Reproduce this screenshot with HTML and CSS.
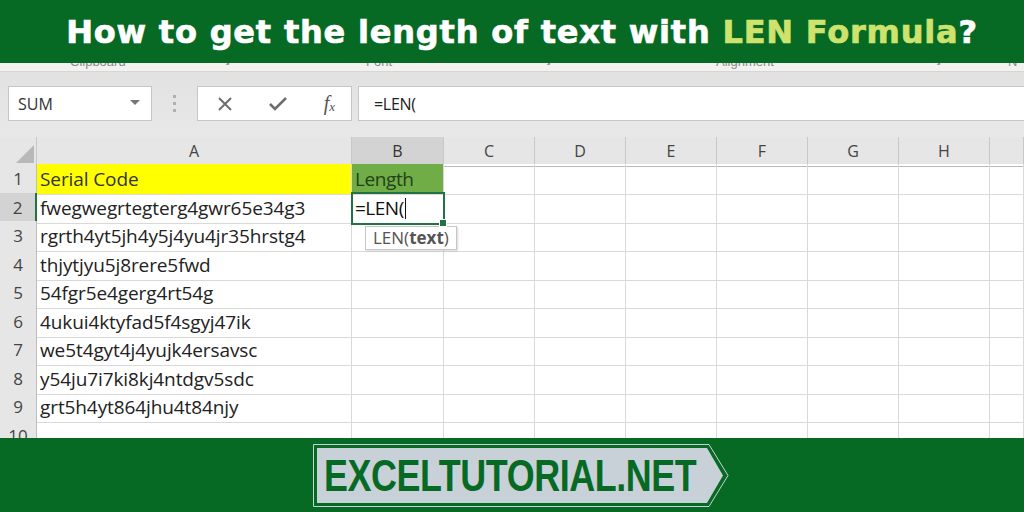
FILE: index.html
```html
<!DOCTYPE html>
<html lang="en">
<head>
    <meta charset="UTF-8">
    <meta name="viewport" content="width=device-width, initial-scale=1.0">
    <title>How to get the length of text with LEN Formula?</title>
    <link rel="stylesheet" href="styles.css">
</head>
<body>
<div class="page">
    <header class="banner">
        <h1>How to get the length of text with <span class="hl">LEN Formula</span>?</h1>
    </header>

    <div class="ribbon">
        <span class="grp g-clip">Clipboard</span>
        <span class="launch l1">&#8600;</span>
        <span class="grp g-font">Font</span>
        <span class="launch l2">&#8600;</span>
        <span class="grp g-align">Alignment</span>
        <span class="launch l3">&#8600;</span>
        <span class="grp g-num">N</span>
    </div>

    <div class="formula-area">
        <div class="name-box">
            <span>SUM</span>
            <svg class="caret" width="10" height="6" viewBox="0 0 10 6"><path d="M0 0 L10 0 L5 5 Z" fill="#777"/></svg>
        </div>
        <div class="dots"><i></i><i></i><i></i></div>
        <div class="fx-buttons">
            <svg width="16" height="16" viewBox="0 0 16 16"><path d="M2 2 L14 14 M14 2 L2 14" stroke="#6d6d6d" stroke-width="2"/></svg>
            <svg width="20" height="16" viewBox="0 0 20 16"><path d="M2 8 L7 13 L18 2" stroke="#6d6d6d" stroke-width="2.6" fill="none"/></svg>
            <span class="fx"><i>f</i><sub>x</sub></span>
        </div>
        <div class="formula-input">=LEN(</div>
    </div>

    <div class="sheet">
        <div class="row head">
            <div class="corner"><svg width="20" height="20" viewBox="0 0 20 20"><path d="M20 2 L20 20 L2 20 Z" fill="#b8b8b8"/></svg></div>
            <div>A</div><div class="sel-col">B</div><div>C</div><div>D</div><div>E</div><div>F</div><div>G</div><div>H</div><div></div>
        </div>
        <div class="row">
            <div class="num">1</div><div class="yellow">Serial Code</div><div class="green">Length</div><div></div><div></div><div></div><div></div><div></div><div></div><div></div>
        </div>
        <div class="row">
            <div class="num sel-row">2</div><div>fwegwegrtegterg4gwr65e34g3</div>
            <div class="active">=LEN(<span class="cursor"></span><span class="tip">LEN(<b>text</b>)</span></div>
            <div></div><div></div><div></div><div></div><div></div><div></div><div></div>
        </div>
        <div class="row">
            <div class="num">3</div><div>rgrth4yt5jh4y5j4yu4jr35hrstg4</div><div></div><div></div><div></div><div></div><div></div><div></div><div></div><div></div>
        </div>
        <div class="row">
            <div class="num">4</div><div>thjytjyu5j8rere5fwd</div><div></div><div></div><div></div><div></div><div></div><div></div><div></div><div></div>
        </div>
        <div class="row">
            <div class="num">5</div><div>54fgr5e4gerg4rt54g</div><div></div><div></div><div></div><div></div><div></div><div></div><div></div><div></div>
        </div>
        <div class="row">
            <div class="num">6</div><div>4ukui4ktyfad5f4sgyj47ik</div><div></div><div></div><div></div><div></div><div></div><div></div><div></div><div></div>
        </div>
        <div class="row">
            <div class="num">7</div><div>we5t4gyt4j4yujk4ersavsc</div><div></div><div></div><div></div><div></div><div></div><div></div><div></div><div></div>
        </div>
        <div class="row">
            <div class="num">8</div><div>y54ju7i7ki8kj4ntdgv5sdc</div><div></div><div></div><div></div><div></div><div></div><div></div><div></div><div></div>
        </div>
        <div class="row">
            <div class="num">9</div><div>grt5h4yt864jhu4t84njy</div><div></div><div></div><div></div><div></div><div></div><div></div><div></div><div></div>
        </div>
        <div class="row">
            <div class="num">10</div><div></div><div></div><div></div><div></div><div></div><div></div><div></div><div></div><div></div>
        </div>
    </div>

    <footer class="banner bottom">
        <div class="badge">
            <svg class="badge-shape" width="416" height="63" viewBox="0 0 416 63">
                <polygon points="0.5,0.5 396,0.5 415,31.5 396,62.5 0.5,62.5" fill="#066a24" stroke="#c9d1d8" stroke-width="1"/>
                <polygon points="4,4 394,4 410,31.5 394,59 4,59" fill="#c9d1d8"/>
            </svg>
            <span class="badge-text">EXCELTUTORIAL.NET</span>
        </div>
    </footer>
</div>
</body>
</html>
```

FILE: styles.css
```css
* {
    margin: 0;
    padding: 0;
    box-sizing: border-box;
}

body {
    width: 1024px;
    height: 512px;
    overflow: hidden;
    background: #ffffff;
    font-family: 'Open Sans', 'Noto Sans', sans-serif;
    color: #222;
}

.page {
    width: 1024px;
    height: 512px;
    display: flex;
    flex-direction: column;
    overflow: hidden;
}

.banner {
    background: #066a24;
    height: 63px;
    flex-shrink: 0;
    display: flex;
    align-items: center;
    justify-content: center;
}

.banner h1 {
    font-family: 'DejaVu Sans', 'Open Sans', sans-serif;
    font-weight: 700;
    font-size: 32px;
    letter-spacing: 0.8px;
    -webkit-text-stroke-width: 0.7px;
    color: #ffffff;
    white-space: nowrap;
    padding-left: 20px;
}

.hl {
    color: #cde36d;
}

/* ribbon strip, mostly hidden under the banner */
.ribbon {
    height: 9px;
    background: #f3f2f1;
    border-bottom: 1px solid #d6d6d6;
    position: relative;
    overflow: hidden;
    flex-shrink: 0;
}

.grp, .launch {
    position: absolute;
    top: -9px;
    font-family: 'Liberation Sans', sans-serif;
    font-size: 13px;
    color: #8a8a8a;
    line-height: 16px;
}

.g-clip { left: 70px; }
.l1 { left: 222px; font-size: 10px; }
.g-font { left: 366px; }
.l2 { left: 543px; font-size: 10px; }
.g-align { left: 716px; }
.l3 { left: 933px; font-size: 10px; }
.g-num { left: 1008px; }

.formula-area {
    height: 65px;
    flex-shrink: 0;
    background: linear-gradient(#e2e2e2, #e8e8e8);
    display: flex;
    align-items: flex-start;
    padding: 14px 0 0 8px;
}

.name-box, .fx-buttons, .formula-input {
    height: 35px;
    background: #ffffff;
    border: 1px solid #c6c6c6;
}

.name-box {
    width: 144px;
    display: flex;
    align-items: center;
    justify-content: space-between;
    padding: 0 11px 0 9px;
    font-size: 16px;
    color: #333;
}

.caret {
    margin-top: -2px;
}

.dots {
    width: 45px;
    height: 35px;
    display: flex;
    flex-direction: column;
    align-items: center;
    justify-content: center;
    gap: 4px;
}

.dots i {
    width: 3px;
    height: 3px;
    background: #b0b0b0;
}

.fx-buttons {
    width: 155px;
    display: flex;
    align-items: center;
    justify-content: space-between;
    padding: 0 16px 0 19px;
}

.fx {
    font-family: 'Liberation Serif', serif;
    font-size: 20px;
    color: #555;
}

.fx sub {
    font-size: 13px;
    font-style: italic;
    vertical-align: -1px;
}

.formula-input {
    flex: 1;
    margin-left: 6px;
    border-right: none;
    padding-left: 15px;
    display: flex;
    align-items: center;
    font-size: 16px;
    color: #222;
    letter-spacing: -0.3px;
}

/* spreadsheet grid */
.sheet {
    flex: 1;
    overflow: hidden;
    background: #ffffff;
}

.row {
    display: grid;
    grid-template-columns: 37px 315px 92px 91px 91px 91px 91px 91px 91px 1fr;
    height: 28.5px;
}

.row > div {
    border-right: 1px solid #d9d9d9;
    border-bottom: 1px solid #d9d9d9;
    font-size: 19px;
    line-height: 30px;
    padding-left: 3px;
    white-space: nowrap;
    letter-spacing: -0.1px;
    position: relative;
}

.row.head {
    height: 27px;
    background: #e6e6e6;
}

.row.head > div {
    text-align: center;
    padding-left: 0;
    color: #444;
    font-size: 16px;
    line-height: 28px;
    letter-spacing: 0;
    border-right: 1px solid #c8c8c8;
    border-bottom: 1px solid #b9b9b9;
}

.row.head > .corner {
    display: flex;
    align-items: flex-end;
    justify-content: flex-end;
    padding: 0 2px 3px 0;
}

.row.head > .sel-col {
    background: #d3d3d3;
    border-bottom: 2px solid #217346;
    color: #333;
}

.row > .num {
    background: #e6e6e6;
    text-align: center;
    padding-left: 0;
    color: #444;
    font-size: 17px;
    letter-spacing: 0;
    border-right: 1px solid #bdbdbd;
    border-bottom: 1px solid #cfcfcf;
}

.row > .sel-row {
    background: #d3d3d3;
    border-right: 2px solid #217346;
}

.row > .yellow {
    background: #ffff00;
    color: #333;
}

.row > .green {
    background: #70ad47;
    color: #23401a;
    letter-spacing: -0.4px;
}

.row > .active {
    outline: 2px solid #217346;
    outline-offset: -1px;
    z-index: 2;
    color: #111;
    letter-spacing: -0.5px;
}

.row > .active::after {
    content: '';
    position: absolute;
    right: -4px;
    bottom: -4px;
    width: 6px;
    height: 6px;
    background: #217346;
    border: 1px solid #ffffff;
}

.cursor {
    display: inline-block;
    width: 1.5px;
    height: 21px;
    background: #111;
    vertical-align: -4px;
    margin-left: 1px;
}

.tip {
    position: absolute;
    left: 13px;
    top: 33px;
    padding: 0 7px;
    height: 24px;
    line-height: 22px;
    background: #ffffff;
    border: 1px solid #c6c6c6;
    box-shadow: 1px 1px 2px rgba(0, 0, 0, 0.15);
    font-size: 17px;
    letter-spacing: 0;
    color: #555;
}

.tip b {
    font-weight: 700;
}

/* bottom banner */
.banner.bottom {
    height: 74px;
}

.badge {
    position: relative;
    width: 416px;
    height: 63px;
    margin-left: 17px;
    display: flex;
    align-items: center;
}

.badge-shape {
    position: absolute;
    left: 0;
    top: 0;
}

.badge-text {
    position: relative;
    font-family: 'Liberation Sans', Arial, sans-serif;
    font-weight: 700;
    font-size: 44px;
    color: #066a24;
    letter-spacing: -0.5px;
    transform: scaleX(0.815);
    transform-origin: left center;
    margin-left: 11px;
    padding-top: 2px;
}
```
